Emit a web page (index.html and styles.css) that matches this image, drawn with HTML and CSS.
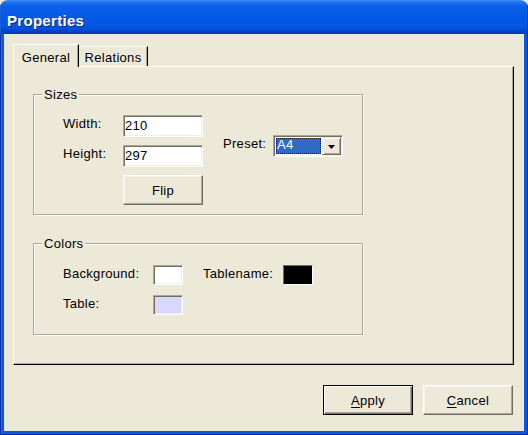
FILE: index.html
```html
<!DOCTYPE html>
<html lang="en">
<head>
<meta charset="utf-8">
<title>Properties</title>
<link rel="stylesheet" href="styles.css">
</head>
<body>
<div class="window">
  <div class="titlebar"><span class="title">Properties</span></div>
  <div class="frame">
    <div class="client">
      <div class="tabs">
        <div class="tab active">General</div>
        <div class="tab">Relations</div>
      </div>
      <div class="panel">
        <fieldset class="group sizes">
          <legend>Sizes</legend>
          <div class="sizes-grid">
            <span class="lbl r1">Width:</span>
            <div class="field r1">210</div>
            <span class="lbl r2">Height:</span>
            <div class="field r2">297</div>
            <div class="btn flip">Flip</div>
            <span class="lbl preset-lbl">Preset:</span>
            <div class="combo">
              <span class="combo-sel">A4</span>
              <span class="combo-btn"><svg width="7" height="4" viewBox="0 0 7 4"><path d="M0 0h7L3.5 4z" fill="#000"/></svg></span>
            </div>
          </div>
        </fieldset>
        <fieldset class="group colors">
          <legend>Colors</legend>
          <div class="colors-grid">
            <span class="lbl">Background:</span>
            <span class="swatch white"></span>
            <span class="lbl c4">Tablename:</span>
            <span class="swatch black"></span>
            <span class="lbl">Table:</span>
            <span class="swatch lavender"></span>
          </div>
        </fieldset>
      </div>
      <div class="buttons">
        <div class="btn dlg default"><u>A</u>pply</div>
        <div class="btn dlg"><u>C</u>ancel</div>
      </div>
    </div>
  </div>
</div>
</body>
</html>
```
FILE: styles.css
```css
html, body {
  margin: 0;
  padding: 0;
}
body {
  width: 528px;
  height: 435px;
  overflow: hidden;
  background: #ece9d8;
  font-family: "Liberation Sans", Arial, sans-serif;
  font-size: 13px;
  letter-spacing: 0.3px;
  color: #000;
}
.window {
  width: 528px;
  height: 435px;
  display: flex;
  flex-direction: column;
  border-radius: 8px 8px 0 0;
  overflow: hidden;
}
.titlebar {
  height: 34px;
  box-sizing: border-box;
  padding: 12px 0 0 7px;
  background: linear-gradient(#3d8ff7 0, #2276f2 2px, #0c5fe9 6px, #0559e6 16px, #0355e4 26px, #0250dc 29px, #0043c9 31px, #0039b8 34px);
  box-shadow: inset 1px 0 #1b5fd8, inset -1px 0 #0033b0;
}
.title {
  font-weight: bold;
  font-size: 15px;
  line-height: 18px;
  letter-spacing: 0.3px;
  color: #fff;
  text-shadow: 1px 1px 0 #0a2a8a;
}
.frame {
  flex: 1;
  display: flex;
  padding: 0 4px 4px;
  background: #0a57e2;
  box-shadow: inset 1px 0 #0831a8, inset -1px 0 #00229a, inset 0 -1px #00229a, inset 2px 0 #1a69ee;
}
.client {
  flex: 1;
  display: flex;
  flex-direction: column;
  background: #ece9d8;
}
.tabs {
  display: flex;
  align-items: flex-end;
  margin: 10px 0 0 9px;
}
.tab {
  box-sizing: border-box;
  height: 20px;
  line-height: 15px;
  padding-top: 3px;
  text-align: center;
  background: #ece9d8;
  border-top: 1px solid #fff;
  border-right: 1px solid #000;
  box-shadow: inset -1px 0 #aca899;
}
.tab.active {
  position: relative;
  z-index: 1;
  width: 66px;
  height: 23px;
  margin-bottom: -1px;
  padding-top: 5px;
  border-left: 1px solid #fff;
}
.tab:not(.active) {
  width: 69px;
}
.panel {
  box-sizing: border-box;
  width: 501px;
  height: 299px;
  margin-left: 9px;
  padding-left: 19px;
  border-top: 1px solid #fff;
  border-left: 1px solid #fff;
  border-right: 1px solid #000;
  border-bottom: 1px solid #000;
  box-shadow: inset -1px -1px #aca899;
}
.group {
  box-sizing: border-box;
  width: 330px;
  margin: 0;
  border: 1px solid #aca899;
  box-shadow: 1px 1px 0 #fff, inset 1px 1px 0 #fff;
}
.group legend {
  margin-left: 8px;
  padding: 0 2px;
  line-height: 15px;
  background: #ece9d8;
}
.sizes {
  margin-top: 20px;
  padding: 13px 0 9px 0;
}
.colors {
  margin-top: 21px;
  padding: 14px 0 19px 0;
}
.lbl {
  align-self: start;
  padding-top: 1px;
  line-height: 15px;
  white-space: nowrap;
}
.sizes-grid {
  display: grid;
  grid-template-columns: 60px 80px 20px 50px 70px;
  grid-template-rows: 22px 22px 30px;
  row-gap: 8px;
  margin-left: 29px;
}
.r1 { grid-row: 1; }
.r2 { grid-row: 2; }
.field {
  grid-column: 2;
  box-sizing: border-box;
  height: 22px;
  padding-left: 1px;
  line-height: 20px;
  background: #fff;
  border: 1px solid;
  border-color: #aca899 #fff #fff #aca899;
  box-shadow: inset 1px 1px #716f64, inset -1px -1px #f1efe2;
}
.btn {
  box-sizing: border-box;
  display: flex;
  align-items: center;
  justify-content: center;
  background: #ece9d8;
  border: 1px solid;
  border-color: #fff #716f64 #716f64 #fff;
  box-shadow: inset -1px -1px #aca899, inset 1px 1px #f5f4ea;
}
.flip {
  grid-column: 2;
  grid-row: 3;
}
.preset-lbl {
  grid-column: 4;
  grid-row: 1 / 3;
  margin-top: 20px;
}
.combo {
  grid-column: 5;
  grid-row: 1 / 3;
  align-self: start;
  margin-top: 20px;
  box-sizing: border-box;
  width: 70px;
  height: 22px;
  display: flex;
  padding: 1px;
  background: #fff;
  border: 1px solid;
  border-color: #aca899 #fff #fff #aca899;
  box-shadow: inset 1px 1px #716f64, inset -1px -1px #f1efe2;
}
.combo-sel {
  flex: 1;
  margin: 1px 1px 1px 1px;
  padding-left: 1px;
  line-height: 14px;
  color: #fff;
  background: #316ac5;
  outline: 1px dotted #1a1a1a;
  outline-offset: -1px;
}
.combo-btn {
  box-sizing: border-box;
  width: 19px;
  display: flex;
  align-items: center;
  justify-content: center;
  background: #ece9d8;
  border: 1px solid;
  border-color: #ece9d8 #716f64 #716f64 #ece9d8;
  box-shadow: inset 1px 1px #fff, inset -1px -1px #aca899;
}
.combo-btn svg {
  display: block;
  margin-top: 1px;
}
.colors-grid {
  display: grid;
  grid-template-columns: 90px 30px 20px 80px 30px;
  grid-template-rows: 20px 20px;
  row-gap: 10px;
  margin-left: 29px;
}
.c4 { grid-column: 4; }
.swatch {
  box-sizing: border-box;
  width: 30px;
  height: 20px;
  border: 1px solid;
  border-color: #aca899 #fff #fff #aca899;
  box-shadow: inset 1px 1px #716f64, inset -1px -1px #f1efe2;
}
.swatch.white { background: #fff; }
.swatch.black { background: #000; box-shadow: none; border-color: #716f64 #fff #fff #716f64; }
.swatch.lavender { background: #d8d8fc; }
.buttons {
  display: flex;
  justify-content: flex-end;
  gap: 10px;
  margin-top: 20px;
  padding-right: 11px;
}
.dlg {
  width: 90px;
  height: 30px;
}
.dlg.default {
  border: 1px solid #000;
  box-shadow: inset 1px 1px #fff, inset -1px -1px #716f64, inset -2px -2px #aca899;
}
.dlg u {
  text-decoration-thickness: 1px;
  text-underline-offset: 2px;
}
```
